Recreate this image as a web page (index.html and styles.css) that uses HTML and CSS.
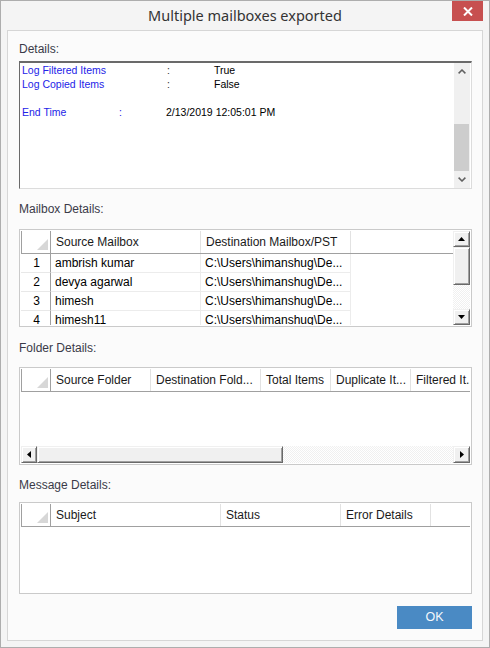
FILE: index.html
```html
<!DOCTYPE html>
<html>
<head>
<meta charset="utf-8">
<title>Multiple mailboxes exported</title>
<link rel="stylesheet" href="styles.css">
</head>
<body>
<div class="window">
  <div class="titlebar">
    <span class="title">Multiple mailboxes exported</span>
    <div class="close">
      <svg width="10" height="9" viewBox="0 0 10 9"><path d="M1 0.5 L9 8.5 M9 0.5 L1 8.5" stroke="#fff" stroke-width="2"/></svg>
    </div>
  </div>
  <div class="panel">
    <div class="label m1">Details:</div>
    <div class="details">
      <div class="log">
        <div class="line"><span class="k wide">Log Filtered Items</span><span class="c">:</span><span class="v">True</span></div>
        <div class="line"><span class="k wide">Log Copied Items</span><span class="c">:</span><span class="v">False</span></div>
        <div class="line"></div>
        <div class="line"><span class="k narrow">End Time</span><span class="c blue">:</span><span class="v">2/13/2019 12:05:01 PM</span></div>
      </div>
      <div class="msb">
        <div class="msb-btn"><svg width="8" height="5" viewBox="0 0 8 5"><polyline points="0.6,4.4 4,1 7.4,4.4" fill="none" stroke="#606060" stroke-width="1.5"/></svg></div>
        <div class="msb-gap"></div>
        <div class="msb-thumb"></div>
        <div class="msb-btn"><svg width="8" height="5" viewBox="0 0 8 5"><polyline points="0.6,0.6 4,4 7.4,0.6" fill="none" stroke="#606060" stroke-width="1.5"/></svg></div>
      </div>
    </div>

    <div class="label m2">Mailbox Details:</div>
    <div class="grid g-mail">
      <div class="gmain">
        <div class="ghead">
          <div class="gcorner"><svg class="tri" width="11" height="11" viewBox="0 0 11 11"><polygon points="0,11 11,11 11,0" fill="#d7d7d7"/></svg></div>
          <div class="hc w150">Source Mailbox</div>
          <div class="hc w150">Destination Mailbox/PST</div>
        </div>
        <div class="grow"><div class="rn">1</div><div class="dc w150">ambrish kumar</div><div class="dc w150">C:\Users\himanshug\De...</div></div>
        <div class="grow"><div class="rn">2</div><div class="dc w150">devya agarwal</div><div class="dc w150">C:\Users\himanshug\De...</div></div>
        <div class="grow"><div class="rn">3</div><div class="dc w150">himesh</div><div class="dc w150">C:\Users\himanshug\De...</div></div>
        <div class="grow"><div class="rn">4</div><div class="dc w150">himesh11</div><div class="dc w150">C:\Users\himanshug\De...</div></div>
      </div>
      <div class="vsb">
        <div class="cbtn vbtn"><svg width="7" height="4" viewBox="0 0 7 4"><polygon points="0,4 7,4 3.5,0" fill="#000"/></svg></div>
        <div class="cbtn vthumb"></div>
        <div class="track"></div>
        <div class="cbtn vbtn"><svg width="7" height="4" viewBox="0 0 7 4"><polygon points="0,0 7,0 3.5,4" fill="#000"/></svg></div>
      </div>
    </div>

    <div class="label m3">Folder Details:</div>
    <div class="grid g-folder col">
      <div class="ghead">
        <div class="gcorner"><svg class="tri" width="11" height="11" viewBox="0 0 11 11"><polygon points="0,11 11,11 11,0" fill="#d7d7d7"/></svg></div>
        <div class="hc w100">Source Folder</div>
        <div class="hc w110">Destination Fold...</div>
        <div class="hc w70">Total Items</div>
        <div class="hc w80">Duplicate It...</div>
        <div class="hc last">Filtered It..</div>
      </div>
      <div class="gbody"></div>
      <div class="hsb">
        <div class="cbtn hbtn"><svg width="4" height="7" viewBox="0 0 4 7"><polygon points="4,0 4,7 0,3.5" fill="#000"/></svg></div>
        <div class="cbtn hthumb"></div>
        <div class="track"></div>
        <div class="cbtn hbtn"><svg width="4" height="7" viewBox="0 0 4 7"><polygon points="0,0 0,7 4,3.5" fill="#000"/></svg></div>
      </div>
    </div>

    <div class="label m4">Message Details:</div>
    <div class="grid g-msg col">
      <div class="ghead">
        <div class="gcorner"><svg class="tri" width="11" height="11" viewBox="0 0 11 11"><polygon points="0,11 11,11 11,0" fill="#d7d7d7"/></svg></div>
        <div class="hc w170">Subject</div>
        <div class="hc w120">Status</div>
        <div class="hc w90">Error Details</div>
      </div>
      <div class="gbody"></div>
    </div>

    <div class="actions">
      <div class="ok">OK</div>
    </div>
  </div>
</div>
</body>
</html>
```

FILE: styles.css
```css
* { box-sizing: border-box; }
html, body { margin: 0; padding: 0; }
body {
  width: 490px;
  height: 648px;
  background: #f4f4f4;
  font-family: "Liberation Sans", Arial, sans-serif;
  font-size: 12px;
  color: #000;
}
.window {
  position: relative;
  width: 490px;
  height: 648px;
  border: 1px solid #adadad;
  background: #f4f4f4;
}
.titlebar {
  height: 29px;
  display: flex;
  align-items: center;
  justify-content: center;
}
.title {
  font-family: "Noto Sans", "Open Sans", sans-serif;
  font-size: 14.5px;
  color: #333;
  margin-top: -1px;
}
.close {
  position: absolute;
  top: 0;
  right: 6px;
  width: 31px;
  height: 20px;
  background: #c75050;
  display: flex;
  align-items: center;
  justify-content: center;
}
.panel {
  margin-left: 6px;
  width: 476px;
  height: 611px;
  border: 1px solid #d6d6d6;
  background: #fbfbfb;
  padding: 0 10px 0 11px;
  display: flex;
  flex-direction: column;
}
.label {
  height: 14px;
  line-height: 14px;
  font-size: 12px;
  color: #3a3a48;
}
.m1 { margin-top: 11px; }
.m2 { margin-top: 13px; }
.m3 { margin-top: 14px; }
.m4 { margin-top: 13px; }

.details {
  margin-top: 5px;
  width: 453px;
  height: 128px;
  background: #fff;
  border-style: solid;
  border-width: 2px 1px 1px 1px;
  border-color: #6a6a6a #dcdcdc #dcdcdc #6a6a6a;
  display: flex;
}
.log {
  flex: 1;
  padding-left: 2px;
  font-size: 10.5px;
  line-height: 14px;
}
.line { height: 14px; white-space: nowrap; }
.k { display: inline-block; color: #2323e8; }
.k.wide { width: 145px; }
.k.narrow { width: 97px; }
.c { display: inline-block; width: 47px; color: #333; }
.c.blue { color: #2323e8; }
.v { color: #000; }

.msb {
  width: 16px;
  margin-right: 1px;
  background: #f0f0f0;
  display: flex;
  flex-direction: column;
}
.msb-btn {
  height: 17px;
  display: flex;
  align-items: center;
  justify-content: center;
}
.msb-gap { flex: 1; }
.msb-thumb {
  height: 47px;
  background: #cdcdcd;
  margin: 0 1px 0 0;
}

.grid {
  width: 453px;
  background: #fff;
  border: 1px solid #cacaca;
  padding: 1px;
  display: flex;
}
.grid.col { flex-direction: column; }
.g-mail { margin-top: 13px; height: 98px; }
.g-folder { margin-top: 12px; height: 98px; }
.g-msg { margin-top: 10px; height: 92px; }

.gmain { flex: 1; overflow: hidden; }
.ghead {
  display: flex;
  height: 23px;
  border-bottom: 1px solid #a0a0a0;
  flex-shrink: 0;
  overflow: hidden;
}
.gcorner {
  position: relative;
  width: 30px;
  flex-shrink: 0;
  border-left: 1px solid #a0a0a0;
  border-right: 1px solid #a0a0a0;
}
.tri { position: absolute; right: 2px; bottom: 3px; }
.hc {
  flex-shrink: 0;
  height: 22px;
  line-height: 22px;
  padding-left: 5px;
  border-right: 1px solid #e2e2e2;
  color: #1a1a1a;
  white-space: nowrap;
  overflow: hidden;
}
.hc.last { border-right: none; flex: 1; }
.w70 { width: 70px; }
.w80 { width: 80px; }
.w90 { width: 90px; }
.w100 { width: 100px; }
.w110 { width: 110px; }
.w120 { width: 120px; }
.w150 { width: 150px; }
.w170 { width: 170px; }

.grow { display: flex; height: 19px; }
.rn {
  width: 30px;
  flex-shrink: 0;
  text-align: center;
  line-height: 18px;
  border-right: 1px solid #a0a0a0;
  border-bottom: 1px solid #e8e8e8;
  padding-left: 2px;
}
.dc {
  flex-shrink: 0;
  line-height: 18px;
  padding-left: 4px;
  border-right: 1px solid #ececec;
  border-bottom: 1px solid #ececec;
  white-space: nowrap;
  overflow: hidden;
}
.gbody { flex: 1; }

.cbtn {
  background: #f0f0f0;
  border: 1px solid;
  border-color: #f0f0f0 #696969 #696969 #f0f0f0;
  box-shadow: inset 1px 1px 0 #fff, inset -1px -1px 0 #a0a0a0;
  display: flex;
  align-items: center;
  justify-content: center;
}
.track {
  flex: 1;
  background: repeating-conic-gradient(#f0f0f0 0% 25%, #ffffff 0% 50%) 0 0 / 2px 2px;
}
.vsb {
  width: 17px;
  display: flex;
  flex-direction: column;
}
.vbtn { height: 16px; }
.vthumb { height: 38px; }
.hsb {
  height: 17px;
  display: flex;
  flex-shrink: 0;
}
.hbtn { width: 16px; }
.hbtn:last-child { width: 17px; }
.hthumb { width: 246px; }

.actions {
  margin-top: 12px;
  display: flex;
  justify-content: flex-end;
  width: 453px;
}
.ok {
  width: 75px;
  height: 23px;
  background: #4a8ac4;
  color: #f4f8fc;
  font-size: 12.5px;
  line-height: 23px;
  text-align: center;
}
```
